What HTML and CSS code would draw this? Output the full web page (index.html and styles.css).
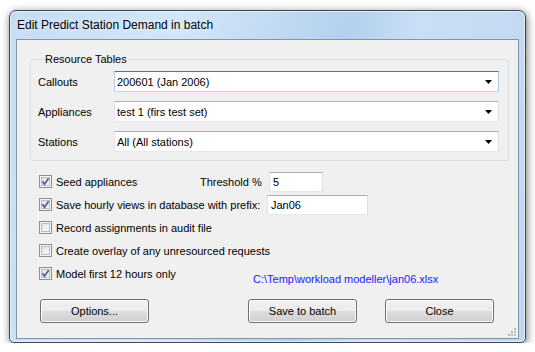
FILE: index.html
```html
<!DOCTYPE html>
<html lang="en">
<head>
  <meta charset="UTF-8">
  <meta name="viewport" content="width=device-width, initial-scale=1.0">
  <link rel="stylesheet" href="styles.css">
  <title>Edit Predict Station Demand in batch</title>
</head>
<body>
  <div class="window">
    <div class="titlebar">Edit Predict Station Demand in batch</div>
    <div class="client">
      <fieldset class="group">
        <legend>Resource Tables</legend>
        <div class="table-rows">
          <label>Callouts</label>
          <div class="combo focused"><span>200601 (Jan 2006)</span><svg class="arrow" width="7" height="4" viewBox="0 0 7 4"><polygon points="0,0 7,0 3.5,4" fill="#000"/></svg></div>
          <label>Appliances</label>
          <div class="combo"><span>test 1 (firs test set)</span><svg class="arrow" width="7" height="4" viewBox="0 0 7 4"><polygon points="0,0 7,0 3.5,4" fill="#000"/></svg></div>
          <label>Stations</label>
          <div class="combo"><span>All (All stations)</span><svg class="arrow" width="7" height="4" viewBox="0 0 7 4"><polygon points="0,0 7,0 3.5,4" fill="#000"/></svg></div>
        </div>
      </fieldset>

      <div class="options">
        <div class="row">
          <span class="cb"><svg width="11" height="11" viewBox="0 0 11 11"><path d="M2.5 5.2 L4.5 8.2 L8.6 2.2" stroke="#4d5f98" stroke-width="1.7" fill="none"/></svg></span>
          <span class="cb-label seed">Seed appliances</span>
          <span class="threshold">Threshold %</span>
          <div class="textbox small">5</div>
        </div>
        <div class="row">
          <span class="cb"><svg width="11" height="11" viewBox="0 0 11 11"><path d="M2.5 5.2 L4.5 8.2 L8.6 2.2" stroke="#4d5f98" stroke-width="1.7" fill="none"/></svg></span>
          <span class="cb-label prefix">Save hourly views in database with prefix:</span>
          <div class="textbox wide">Jan06</div>
        </div>
        <div class="row">
          <span class="cb"></span>
          <span class="cb-label">Record assignments in audit file</span>
        </div>
        <div class="row">
          <span class="cb"></span>
          <span class="cb-label">Create overlay of any unresourced requests</span>
        </div>
        <div class="row">
          <span class="cb"><svg width="11" height="11" viewBox="0 0 11 11"><path d="M2.5 5.2 L4.5 8.2 L8.6 2.2" stroke="#4d5f98" stroke-width="1.7" fill="none"/></svg></span>
          <span class="cb-label model">Model first 12 hours only</span>
          <span class="path">C:\Temp\workload modeller\jan06.xlsx</span>
        </div>
      </div>

      <div class="buttons">
        <button class="btn first">Options...</button>
        <button class="btn">Save to batch</button>
        <button class="btn">Close</button>
      </div>

      <svg class="grip" width="8" height="8" viewBox="0 0 8 8">
        <rect x="6" y="0" width="2" height="2" fill="#b8bcc2"/>
        <rect x="3" y="3" width="2" height="2" fill="#b8bcc2"/>
        <rect x="6" y="3" width="2" height="2" fill="#b8bcc2"/>
        <rect x="0" y="6" width="2" height="2" fill="#b8bcc2"/>
        <rect x="3" y="6" width="2" height="2" fill="#b8bcc2"/>
        <rect x="6" y="6" width="2" height="2" fill="#b8bcc2"/>
      </svg>
    </div>
  </div>
</body>
</html>
```

FILE: styles.css
```css
body {
  margin: 0;
  padding: 10px 0 0 9px;
  background-color: #fff;
  font-family: 'Liberation Sans', Arial, sans-serif;
  font-size: 11px;
  color: #000;
}

.window {
  width: 517px;
  height: 333px;
  box-sizing: border-box;
  border: 1px solid #3b4653;
  border-radius: 7px 7px 5px 5px;
  background: linear-gradient(100deg, #c6ddf4 0%, #d2e6f9 30%, #c0d9f2 48%, #b3d0ee 60%, #c9dff5 72%, #bfd7f0 100%);
  box-shadow: 1px 2px 9px rgba(0, 0, 0, 0.55), inset 0 0 0 1px rgba(255, 255, 255, 0.55);
  padding: 0 6px 3px 6px;
  display: flex;
  flex-direction: column;
}

.titlebar {
  height: 28px;
  padding-left: 1px;
  display: flex;
  align-items: center;
  font-size: 12px;
  text-shadow: 0 0 6px rgba(255, 255, 255, 0.9);
}

.client {
  flex: 1;
  position: relative;
  border: 1px solid #8194a8;
  background-color: #f0f0f0;
}

.group {
  margin: 13px 9px 0 13px;
  padding: 5px 9px 8px 7px;
  border: 1px solid #d5dfe5;
  border-radius: 3px;
  min-inline-size: 0;
}

.group legend {
  padding: 0 1px;
  margin-left: 6px;
  line-height: 13px;
}

.table-rows {
  display: grid;
  grid-template-columns: 76px 1fr;
  row-gap: 9px;
  align-items: center;
}

.combo {
  height: 21px;
  box-sizing: border-box;
  border: 1px solid;
  border-color: #abadb3 #dbdfe6 #e3e9ef #e2e3ea;
  background-color: #fff;
  display: flex;
  align-items: center;
  padding: 0 6px 0 2px;
}

.combo.focused {
  border-color: #3d7bad #a4c9e3 #b7d9ed #b5cfe7;
}

.combo span {
  flex: 1;
}

.options {
  margin-top: 9px;
  padding-left: 22px;
}

.row {
  height: 23px;
  display: flex;
  align-items: center;
}

.cb {
  width: 13px;
  height: 13px;
  box-sizing: border-box;
  border: 1px solid #8e8f8f;
  background: linear-gradient(135deg, #dcdcdc 0%, #f2f2f2 60%, #fbfbfb 100%);
  box-shadow: inset 0 0 0 1px #f4f4f4, inset 0 0 0 2px #bdbdbd;
  margin-right: 4px;
}

.cb svg {
  display: block;
}

.seed {
  width: 144px;
}

.threshold {
  width: 69px;
}

.prefix {
  width: 211px;
}

.model {
  width: 197px;
}

.textbox {
  height: 20px;
  box-sizing: border-box;
  border: 1px solid;
  border-color: #abadb3 #dbdfe6 #e3e9ef #e2e3ea;
  background-color: #fff;
  padding-left: 3px;
  display: flex;
  align-items: center;
}

.textbox.small {
  width: 54px;
}

.textbox.wide {
  width: 101px;
}

.path {
  color: #1a1aff;
  margin-top: 10px;
}

.buttons {
  display: flex;
  gap: 28px;
  margin-top: 14px;
  padding: 0 24px 0 23px;
}

.btn {
  width: 109px;
  height: 24px;
  border: 1px solid #707070;
  border-radius: 3px;
  background: linear-gradient(#f2f2f2 0%, #ebebeb 48%, #dddddd 52%, #cfcfcf 100%);
  box-shadow: inset 0 0 0 1px #fcfcfc;
  font-family: 'Liberation Sans', Arial, sans-serif;
  font-size: 11px;
  color: #000;
  padding: 0;
}

.btn.first {
  margin-right: auto;
}

.grip {
  position: absolute;
  right: 2px;
  bottom: 2px;
}
```
